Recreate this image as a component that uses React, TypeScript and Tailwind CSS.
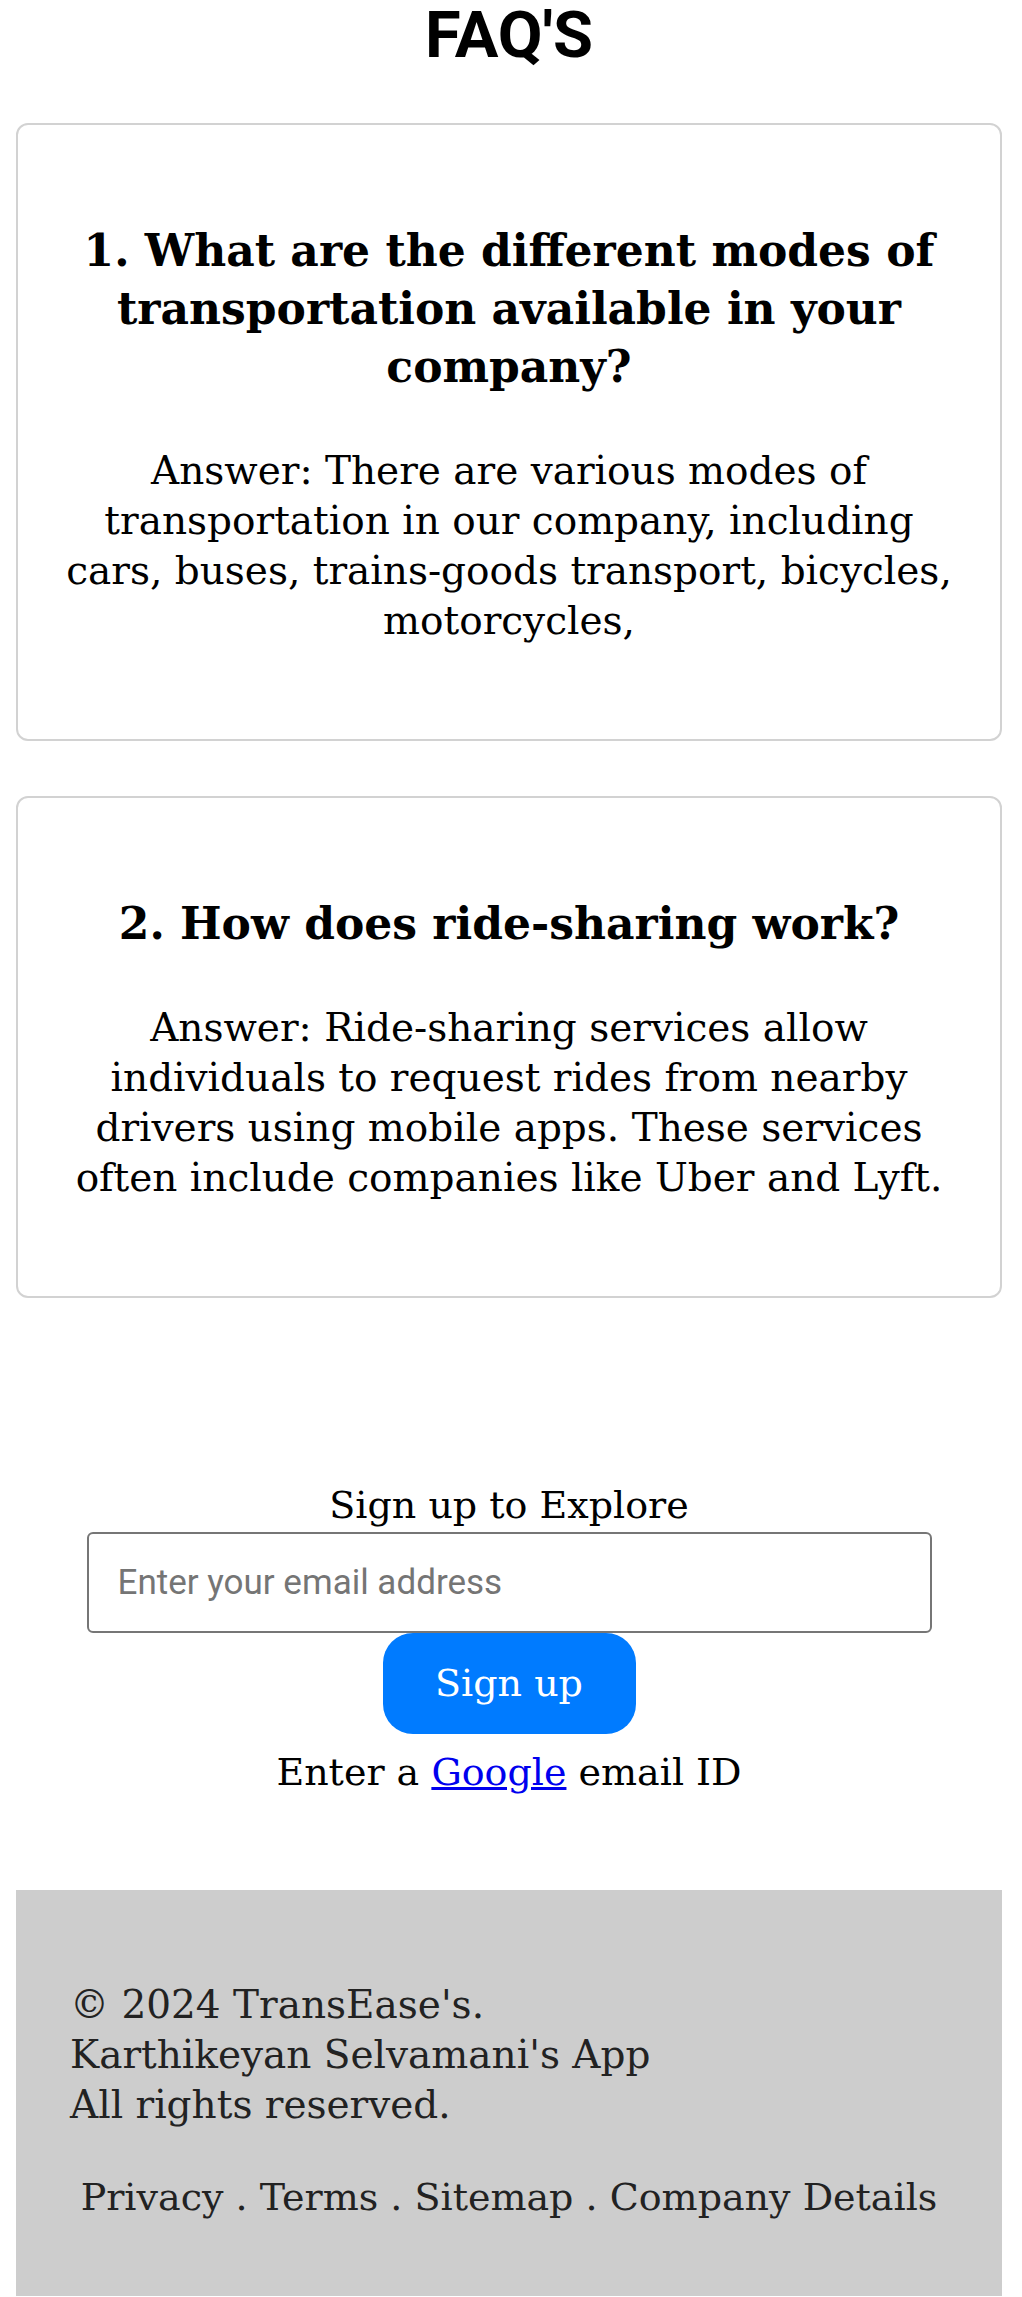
import React from "react";

const faqs = [
  {
    q: ["1. What are the different modes of", "transportation available in your", "company?"],
    a: [
      "Answer: There are various modes of",
      "transportation in our company, including",
      "cars, buses, trains-goods transport, bicycles,",
      "motorcycles,",
    ],
  },
  {
    q: ["2. How does ride-sharing work?"],
    a: [
      "Answer: Ride-sharing services allow",
      "individuals to request rides from nearby",
      "drivers using mobile apps. These services",
      "often include companies like Uber and Lyft.",
    ],
  },
];

function FaqCard({ q, a }: { q: string[]; a: string[] }) {
  return (
    <div className="mx-4 rounded-[12px] border-2 border-[#d2d2d2] bg-white px-2 pt-[97px] pb-[93px] text-center">
      <h3 className="text-[44px] leading-[58px] font-bold text-black">
        {q.map((line) => (
          <span key={line} className="block whitespace-nowrap">
            {line}
          </span>
        ))}
      </h3>
      <p className="mt-[50px] text-[39px] leading-[50px] text-black">
        {a.map((line) => (
          <span key={line} className="block whitespace-nowrap">
            {line}
          </span>
        ))}
      </p>
    </div>
  );
}

export default function App() {
  return (
    <div className="min-h-screen bg-white pr-[4px] font-['DejaVu_Serif',serif]">
      <h1 className="text-center font-['Roboto',sans-serif] text-[65px] leading-[70px] font-bold text-black">
        FAQ'S
      </h1>

      <div className="mt-[53px] flex flex-col gap-[55px]">
        {faqs.map((f) => (
          <FaqCard key={f.q[0]} q={f.q} a={f.a} />
        ))}
      </div>

      <div className="mt-[182px] flex flex-col items-center">
        <p className="text-[38px] leading-[50px] text-black">Sign up to Explore</p>
        <input
          type="email"
          placeholder="Enter your email address"
          className="mt-[2px] h-[101px] w-[845px] rounded-[6px] border-2 border-[#767676] bg-white px-[29px] font-['Roboto',sans-serif] text-[35px] text-black placeholder:text-[#757575] outline-none"
        />
        <button
          type="button"
          className="h-[101px] w-[253px] rounded-[30px] bg-[#007bff] text-[38px] text-white"
        >
          Sign up
        </button>
        <p className="mt-[13px] text-[38px] leading-[50px] text-black">
          Enter a{" "}
          <a href="#" className="text-[#0000ee] underline">
            Google
          </a>{" "}
          email ID
        </p>
      </div>

      <footer className="mx-4 mt-[93px] bg-[#cdcdcd] pt-[90px] pb-[74px] text-[39px] leading-[50px] text-[#222222]">
        <p className="pl-[54px]">
          © 2024 TransEase's.
          <br />
          Karthikeyan Selvamani's App
          <br />
          All rights reserved.
        </p>
        <p className="mt-[42px] whitespace-nowrap text-center text-[38px]">
          Privacy . Terms . Sitemap . Company Details
        </p>
      </footer>
    </div>
  );
}
